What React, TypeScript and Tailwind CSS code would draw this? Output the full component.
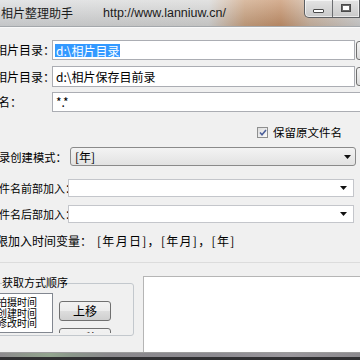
import React from "react";

const cjk = "font-['Noto_Sans_CJK_SC',sans-serif]";

const Arrow = () => (
  <svg width="7" height="4" viewBox="0 0 7 4" className="shrink-0">
    <path d="M0 0h7L3.5 4z" fill="#111" />
  </svg>
);

const BrowseEdge = () => (
  <div className="ml-[1px] h-[19px] w-[24px] shrink-0 rounded-[3px] border border-[#707070] bg-[linear-gradient(180deg,#f4f4f4,#dcdcdc)]" />
);

const TitleButtons = () => (
  <div className="ml-auto flex h-[18px] self-start rounded-bl-[5px] border border-t-0 border-[#5d5f62] bg-[linear-gradient(180deg,#e4e4e4,#c9c9c9)] shadow-[inset_0_0_0_1px_rgba(255,255,255,0.6)]">
    <div className="flex w-[27px] items-center justify-center pt-[4px]">
      <div className="h-[4px] w-[11px] rounded-[1px] border border-[#4a4a4a] bg-white" />
    </div>
    <div className="flex w-[27px] items-center justify-center border-l border-[#6b6d70] pb-[1px]">
      <div className="h-[8px] w-[10px] border border-[#4a4a4a] bg-white shadow-[inset_0_0_0_1px_#6a6a6a]" />
    </div>
  </div>
);

export default function App() {
  return (
    <div className={`flex h-[360px] w-[360px] flex-col overflow-hidden bg-[#f0f0f0] text-[12px] leading-[14px] text-black ${cjk}`}>
      {/* title bar */}
      <div className="flex h-[26px] shrink-0 items-center bg-[linear-gradient(180deg,rgba(255,255,255,0.25),rgba(0,0,0,0.1)),linear-gradient(90deg,#dadcde_0%,#d8d8d7_58%,#cda583_68%,#c7946d_78%,#cfb8a4_86%,#d2d2d2_100%)]">
        <span className="ml-[1px] shrink-0 pb-[1px] text-[12px] text-[#1b1b1b]">相片整理助手</span>
        <span className="ml-[30px] shrink-0 pb-[1px] font-['Liberation_Sans',sans-serif] text-[12.5px] text-[#1b1b1b]">
          http://www.lanniuw.cn/
        </span>
        <TitleButtons />
      </div>
      <div className="h-[1px] shrink-0 bg-[#a4a8ac]" />
      <div className="h-[1px] shrink-0 bg-[#f9f9f9]" />

      {/* source folder */}
      <div className="mt-[12px] flex h-[20px] shrink-0 items-center">
        <span className="ml-[-5px] w-[57px] shrink-0 whitespace-nowrap">相片目录：</span>
        <div className="flex h-[20px] w-[303px] shrink-0 items-center border border-[#abadb3] bg-white pl-[2px]">
          <span className="bg-[#3399ff] px-[1px] leading-[13px] text-white">d:\相片目录</span>
        </div>
        <BrowseEdge />
      </div>

      {/* target folder */}
      <div className="mt-[6px] flex h-[21px] shrink-0 items-center">
        <span className="ml-[-5px] w-[57px] shrink-0 whitespace-nowrap">相片目录：</span>
        <div className="flex h-[21px] w-[303px] shrink-0 items-center border border-[#abadb3] bg-white pl-[3px]">
          d:\相片保存目前录
        </div>
        <BrowseEdge />
      </div>

      {/* file name filter */}
      <div className="mt-[5px] flex h-[20px] shrink-0 items-center">
        <span className="ml-[-2px] w-[54px] shrink-0 whitespace-nowrap">名：</span>
        <div className="flex h-[20px] w-[320px] shrink-0 items-center border border-[#abadb3] bg-white pl-[3px]">
          *.*
        </div>
      </div>

      {/* keep name */}
      <div className="mt-[13px] flex h-[14px] shrink-0 items-center pl-[257px]">
        <div className="flex h-[11px] w-[11px] shrink-0 items-center justify-center border border-[#8e8f8f] bg-[linear-gradient(135deg,#dcdcdc,#fbfbfb)]">
          <svg width="8" height="7" viewBox="0 0 8 7">
            <path d="M1 3.5l2 2.2L7 1" stroke="#4b5f9a" strokeWidth="1.6" fill="none" />
          </svg>
        </div>
        <span className="ml-[5px] whitespace-nowrap text-[11.5px]">保留原文件名</span>
      </div>

      {/* folder mode */}
      <div className="mt-[8px] flex h-[19px] shrink-0 items-center">
        <span className="ml-[-1px] w-[71px] shrink-0 whitespace-nowrap text-[11.3px]">录创建模式：</span>
        <div className="flex h-[19px] w-[286px] shrink-0 items-center justify-between rounded-[3px] border border-[#8a8a8a] bg-[linear-gradient(180deg,#f3f3f3,#e2e2e2)] pl-[4px] pr-[4px]">
          <span>[年]</span>
          <Arrow />
        </div>
      </div>

      {/* prefix */}
      <div className="mt-[13px] flex h-[18px] shrink-0 items-center">
        <span className="ml-[-1px] w-[69px] shrink-0 whitespace-nowrap text-[11px]">件名前部加入：</span>
        <div className="flex h-[18px] w-[286px] shrink-0 items-center justify-end border border-[#c4c6cb] bg-white pr-[6px]">
          <Arrow />
        </div>
      </div>

      {/* suffix */}
      <div className="mt-[8px] flex h-[18px] shrink-0 items-center">
        <span className="ml-[-1px] w-[69px] shrink-0 whitespace-nowrap text-[11px]">件名后部加入：</span>
        <div className="flex h-[18px] w-[286px] shrink-0 items-center justify-end border border-[#c4c6cb] bg-white pr-[6px]">
          <Arrow />
        </div>
      </div>

      {/* hint */}
      <div className="mt-[10px] flex h-[16px] shrink-0 items-center">
        <span className="ml-[-4px] w-[101px] shrink-0 whitespace-nowrap">限加入时间变量：</span>
        <span className="whitespace-nowrap tracking-[1.3px]">[年月日]，[年月]，[年]</span>
      </div>

      <div className="mt-[13px] h-[1px] shrink-0 bg-[#dcdcdc]" />

      {/* lower area */}
      <div className="flex h-[89px] shrink-0">
        <div className="w-[143px] shrink-0">
          <div className="ml-[-4px] mt-[20px] h-[53px] w-[138px] rounded-[3px] border border-[#c3c8cd]">
            <div className="ml-[5px] mt-[-9px] h-[14px] w-fit bg-[#f0f0f0] text-[11px] leading-[14px]">获取方式顺序</div>
            <div className="mt-[4px] flex h-[40px] overflow-hidden">
              <div className="h-[40px] w-[56px] shrink-0 border border-[#828790] bg-white pt-[3px] text-[10px] leading-[10.5px]">
                <div className="ml-[-1px] whitespace-nowrap">拍摄时间</div>
                <div className="ml-[-1px] whitespace-nowrap">创建时间</div>
                <div className="ml-[-1px] whitespace-nowrap">修改时间</div>
              </div>
              <div className="ml-[6px] flex flex-col">
                <button className="mt-[8px] h-[20px] w-[52px] shrink-0 rounded-[3px] border border-[#707070] bg-[linear-gradient(180deg,#f2f2f2_0%,#ebebeb_50%,#dddddd_51%,#cfcfcf_100%)] text-[12px] leading-[14px]">
                  上移
                </button>
                <button className="mt-[7px] h-[20px] w-[52px] shrink-0 rounded-[3px] border border-[#707070] bg-[linear-gradient(180deg,#f2f2f2_0%,#ebebeb_50%,#dddddd_51%,#cfcfcf_100%)] text-[12px] leading-[14px]">
                  下移
                </button>
              </div>
            </div>
          </div>
        </div>
        <div className="mt-[13px] flex-1 border-l border-t border-[#b5b5b5] bg-white" />
      </div>

      {/* window bottom edge */}
      <div className="h-[1px] shrink-0 bg-[#9c9c9c]" />
      <div className="h-[4px] shrink-0 bg-[linear-gradient(90deg,#8d8a8e_0%,#8f9a8c_8%,#93a58f_14%,#8a968a_20%,#8a888c_30%,#8c8a90_60%,#9a979c_80%,#8b898d_100%)]" />
      <div className="h-[3px] shrink-0 bg-[#2f2f31]" />
    </div>
  );
}
